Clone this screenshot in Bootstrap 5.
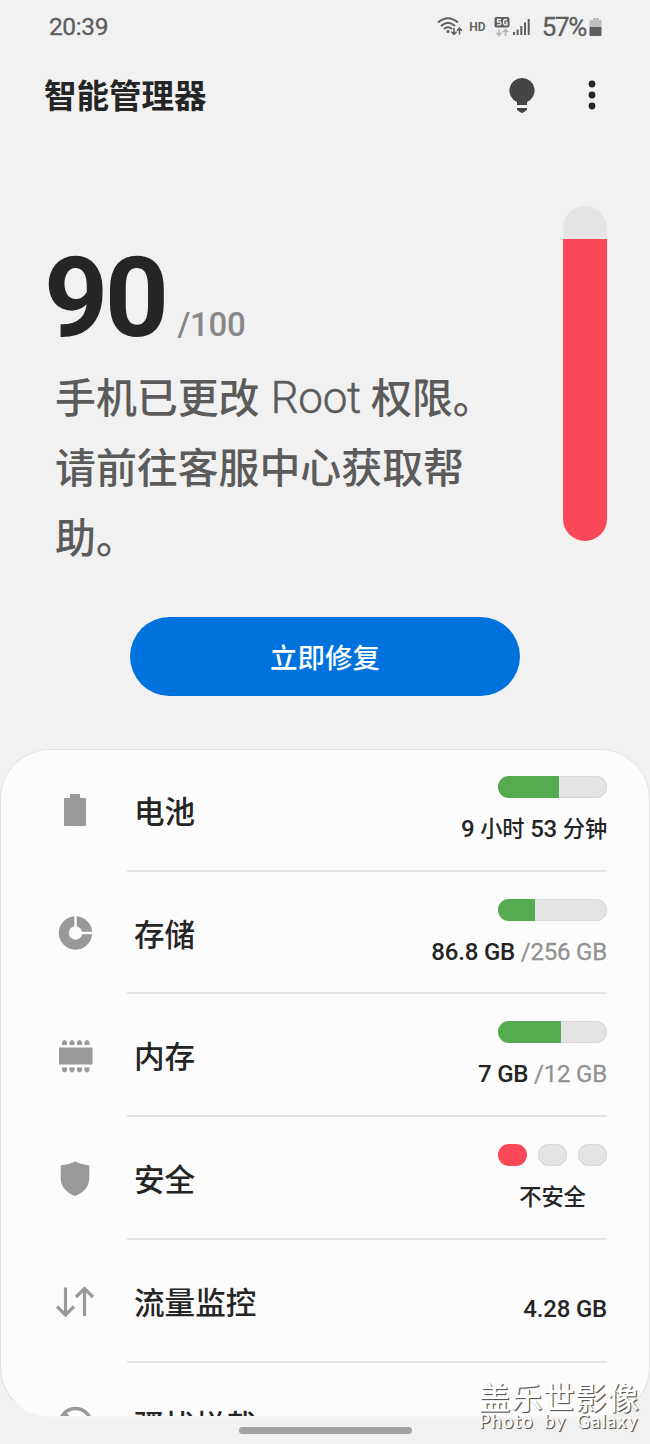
<!DOCTYPE html>
<html lang="zh-CN">
<head>
<meta charset="utf-8">
<meta name="viewport" content="width=device-width, initial-scale=1">
<title>智能管理器</title>
<link href="https://cdn.jsdelivr.net/npm/bootstrap@5.3.0/dist/css/bootstrap.min.css" rel="stylesheet">
<style>
html, body { height: 1444px; overflow: hidden; }
body { background: #f1f1f1; font-family: Roboto, "Noto Sans CJK SC", sans-serif; color: #252525; }
.screen { width: 650px; height: 1444px; overflow: hidden; }
.status { height: 54px; padding: 0 47px 0 49px; color: #5d5d5d; font-size: 24.5px; line-height: 56px; }
.clock { letter-spacing: -.4px; -webkit-text-stroke: .3px #5d5d5d; }
.status svg { display: block; flex: none; }
.hd { font-size: 12px; font-weight: 600; }
.pct { font-size: 26px; letter-spacing: -1.3px; -webkit-text-stroke: .3px #5d5d5d; }
.topbar { height: 84px; padding: 0 51px 0 44px; }
.topbar h1 { font-size: 32.5px; font-weight: 700; line-height: 84px; padding-top: 2px; }
.hero { height: 479px; padding: 67.5px 43px 0 44px; }
.score { height: 157px; padding-top: 34px; }
.score-num { font-size: 112px; font-weight: 700; line-height: 116px; letter-spacing: -3.5px; }
.score-max { font-size: 33px; color: #888; font-weight: 500; margin-left: 12px; letter-spacing: -.3px; }
.notice { font-size: 40.9px; line-height: 70px; font-weight: 500; color: #5b5b5b; padding-left: 11px; }
.notice .latin { font-weight: 300; font-size: 44px; letter-spacing: -.3px; margin-left: 1px; -webkit-text-stroke: .5px #5b5b5b; }
.meter { width: 44px; height: 335px; border-radius: 22px; background: #e5e5e5; }
.meter-fill { background: #fb4858; }
.fix { width: 390px; height: 79px; border-radius: 40px; background: #0072de; color: #fff; font-size: 27.5px; font-weight: 500; border: 0; }
.fix span { display: block; padding-top: 4px; }
.panel { margin-top: 52.5px; height: 668px; border-radius: 50px; background: #fcfcfc; border: 1px solid #e2e2e2; border-bottom-color: #f6f6f6; }
.item { height: 122.75px; padding-right: 42px; }
.item:first-child { height: 122px; }
.item-icon { width: 126px; padding-left: 53px; padding-top: 1px; }
.item:first-child .item-icon { padding-top: 0; padding-bottom: 1px; }
.item-icon svg { display: block; }
.item-body { border-bottom: 2px solid #e4e4e4; padding-left: 7px; }
.item-name { font-size: 30.6px; font-weight: 500; line-height: 128px; height: 120px; }
.item:first-child .item-name { line-height: 126px; }
.item-side { padding-top: 27px; }
.item:first-child .item-side { padding-top: 26px; }
.item-value { font-size: 24px; font-weight: 500; line-height: 32px; margin-top: 15px; letter-spacing: -.2px; }
.item-value .zh { font-size: 22.3px; }
.total { color: #929292; font-weight: 400; -webkit-text-stroke: .3px #929292; }
.gauge { width: 109px; height: 22px; border-radius: 11px; background: #e4e4e4; box-shadow: inset 0 0 0 1px #d9d9d9; }
.gauge-fill { background: #54ab50; }
.dotpill { width: 29px; height: 22px; border-radius: 11px; background: #e4e4e4; box-shadow: inset 0 0 0 1px #d9d9d9; }
.dotpill.bad { background: #fb4858; box-shadow: none; }
.homebar { width: 173px; height: 7px; border-radius: 4px; background: #a3a3a3; margin-top: 10.5px; }
.sign { left: 479px; top: 1378px; color: #fff; text-shadow: 1px 1px 1px #555, 1px 1px 0 #888; white-space: nowrap; }
.sign-zh { font-family: "Noto Sans CJK SC", sans-serif; font-size: 31px; font-weight: 500; line-height: 36px; letter-spacing: 1.2px; }
.sign-en { font-family: Lato, sans-serif; font-size: 18.5px; font-weight: 500; line-height: 18px; letter-spacing: 1.1px; word-spacing: 5px; margin-top: -2px; }
</style>
</head>
<body>
<main class="screen position-relative">
  <header class="status d-flex align-items-center">
    <span class="clock me-auto">20:39</span>
    <svg width="26" height="22" viewBox="0 0 26 22" fill="none" stroke="#5d5d5d" stroke-width="2">
      <path d="M1 6.500Q11 -2 21 6.500M4 10Q11 3.500 18 10M7 13Q11 9.500 15 13"/>
      <circle cx="11" cy="15.500" r="1.600" fill="#5d5d5d" stroke="none"/>
      <path stroke-width="1.500" d="M17 12v6M14.500 15.800l2.500 2.700 2.500-2.700M22.500 18.500v-6M20 14.700l2.500-2.700 2.500 2.700"/>
    </svg>
    <span class="hd" style="margin-left:6px">HD</span>
    <svg width="16" height="20" viewBox="0 0 16 20" style="margin-left:8px">
      <rect x=".5" width="15" height="10.500" rx="2" fill="#5d5d5d"/>
      <path d="M7 2.500H3.500V5H6q1 0 1 1.300T5.800 7.900H3M13 3.200Q12.500 2.500 11.500 2.500 9.500 2.500 9.500 5.200T11.500 7.900H13V5.500H11.500" fill="none" stroke="#f1f1f1" stroke-width="1.300"/>
      <path d="M5 12.500v6M2.500 15.700l2.500 2.800 2.500-2.800M11.500 19v-6M9 15.300l2.500-2.800 2.500 2.800" fill="none" stroke="#b5b5b5" stroke-width="1.700"/>
    </svg>
    <svg width="17" height="18" viewBox="0 0 17 18" style="margin-left:3px" fill="#5d5d5d">
      <path d="M0 14h2v3H0zM3.600 11.500h2V17h-2zM7.300 8h2v9h-2zM11 4.500h2V17h-2zM14.700 1h2v16h-2z"/>
    </svg>
    <span class="pct" style="margin-left:12px">57%</span>
    <svg width="14" height="20" viewBox="0 0 14 20" style="margin-left:3px">
      <path d="M1.500 3H4V1h6v2h2.500v7h-12V4q0-1 1-1z" fill="#bdbdbd"/><path d="M.5 10h12v8q0 1-1 1h-10q-1 0-1-1z" fill="#5d5d5d"/>
    </svg>
  </header>

  <nav class="topbar d-flex align-items-center">
    <h1 class="mb-0 me-auto">智能管理器</h1>
    <svg width="26" height="36" viewBox="0 0 26 36" fill="#454545">
      <path d="M13 0a12.500 12.500 0 0 1 5 24v3H8v-3A12.500 12.500 0 0 1 13 0zM8 30h10v2l-3 2q-2 2-4 0l-3-2z"/>
    </svg>
    <svg width="14" height="30" viewBox="0 0 14 30" fill="#252525" style="margin-left:50px;margin-bottom:2px">
      <circle cx="7" cy="4" r="3.400"/><circle cx="7" cy="15" r="3.400"/><circle cx="7" cy="26" r="3.400"/>
    </svg>
  </nav>

  <section class="hero d-flex justify-content-between align-items-start">
    <div>
      <div class="score d-flex align-items-baseline"><span class="score-num">90</span><span class="score-max">/100</span></div>
      <p class="notice mb-0">手机已更改 <span class="latin">Root</span> 权限。<br>请前往客服中心获取帮<br>助。</p>
    </div>
    <div class="meter overflow-hidden d-flex flex-column justify-content-end"><div class="meter-fill" style="height:90%"></div></div>
  </section>

  <button type="button" class="fix d-block mx-auto p-0"><span>立即修复</span></button>

  <section class="panel overflow-hidden">
    <div class="item d-flex">
      <div class="item-icon d-flex align-items-center"><svg width="44" height="44" fill="#999"><path d="M16 6h10v4h5q1 0 1 1v26q0 1-1 1H11q-1 0-1-1V11q0-1 1-1h5z"/></svg></div>
      <div class="item-body flex-fill d-flex justify-content-between"><span class="item-name">电池</span>
        <div class="item-side d-flex flex-column align-items-end"><div class="gauge d-flex overflow-hidden"><div class="gauge-fill" style="width:56%"></div></div><div class="item-value">9 <span class="zh">小时</span> 53 <span class="zh">分钟</span></div></div></div>
    </div>
    <div class="item d-flex">
      <div class="item-icon d-flex align-items-center"><svg width="44" height="44"><circle cx="21.500" cy="22" r="11.700" fill="none" stroke="#999" stroke-width="10"/><path d="M21.500 22V4M21.500 22h18" stroke="#fcfcfc" stroke-width="2.500"/></svg></div>
      <div class="item-body flex-fill d-flex justify-content-between"><span class="item-name">存储</span>
        <div class="item-side d-flex flex-column align-items-end"><div class="gauge d-flex overflow-hidden"><div class="gauge-fill" style="width:34%"></div></div><div class="item-value">86.8 GB <span class="total">/256 GB</span></div></div></div>
    </div>
    <div class="item d-flex">
      <div class="item-icon d-flex align-items-center"><svg width="44" height="44" fill="#999"><path d="M5 13.500h33.500v17H5zM8 11V8q2.500-4 5 0v3zM15.500 11V8q2.500-4 5 0v3zM23 11V8q2.500-4 5 0v3zM30.500 11V8q2.500-4 5 0v3zM8 33.500v3q2.500 4 5 0v-3zM15.500 33.500v3q2.500 4 5 0v-3zM23 33.500v3q2.500 4 5 0v-3zM30.500 33.500v3q2.500 4 5 0v-3z"/></svg></div>
      <div class="item-body flex-fill d-flex justify-content-between"><span class="item-name">内存</span>
        <div class="item-side d-flex flex-column align-items-end"><div class="gauge d-flex overflow-hidden"><div class="gauge-fill" style="width:58%"></div></div><div class="item-value">7 GB <span class="total">/12 GB</span></div></div></div>
    </div>
    <div class="item d-flex">
      <div class="item-icon d-flex align-items-center"><svg width="44" height="44" fill="#999"><path d="M21 4.500Q28 8 35.300 8.500V21q0 12-14.300 18Q6.700 33 6.700 21V8.500Q14 8 21 4.500z"/></svg></div>
      <div class="item-body flex-fill d-flex justify-content-between"><span class="item-name">安全</span>
        <div class="item-side d-flex flex-column align-items-center"><div class="d-flex" style="gap:11px"><i class="dotpill bad"></i><i class="dotpill"></i><i class="dotpill"></i></div><div class="item-value"><span class="zh">不安全</span></div></div></div>
    </div>
    <div class="item d-flex">
      <div class="item-icon d-flex align-items-center"><svg width="44" height="44" fill="none" stroke="#999" stroke-width="3.200"><path d="M11.500 7.500V35M3 26.500l8.500 8.500 8.500-8.500M30.500 36V8.500M22 17l8.500-8.500L39 17"/></svg></div>
      <div class="item-body flex-fill d-flex justify-content-between"><span class="item-name">流量监控</span>
        <div class="item-side" style="padding-top:38px"><div class="item-value">4.28 GB</div></div></div>
    </div>
    <div class="item d-flex">
      <div class="item-icon d-flex align-items-center"><svg width="44" height="44" fill="none" stroke="#999" stroke-width="3.500"><circle cx="21.500" cy="22" r="15.500"/><path d="M10 11l23 23"/></svg></div>
      <div class="item-body flex-fill"><span class="item-name">骚扰拦截</span></div>
    </div>
  </section>
  <div class="homebar mx-auto"></div>

  <div class="sign position-absolute"><div class="sign-zh">盖乐世影像</div><div class="sign-en">Photo by Galaxy</div></div>
</main>
<script src="https://cdn.jsdelivr.net/npm/bootstrap@5.3.0/dist/js/bootstrap.bundle.min.js"></script>
</body>
</html>
